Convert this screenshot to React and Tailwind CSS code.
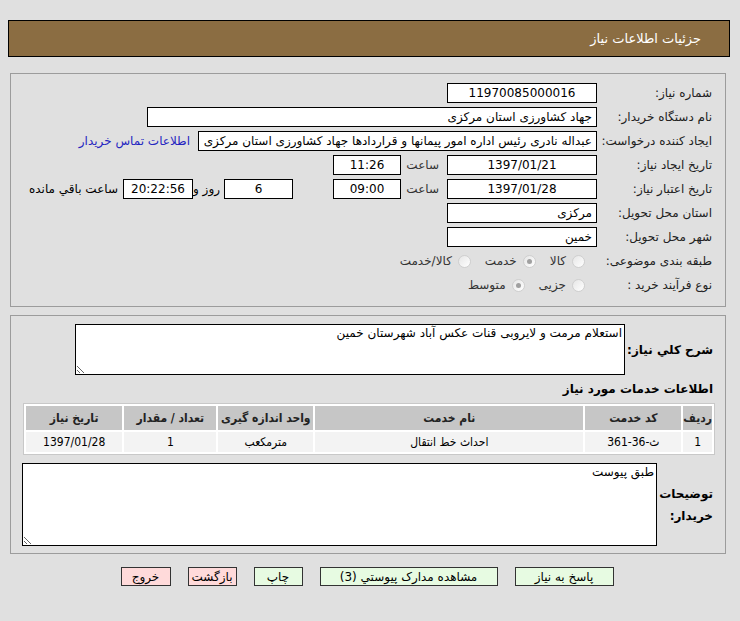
import React from 'react'

function Box({ className = '', children }) {
  return (
    <div className={`h-5 border border-black bg-white px-1 text-[12px] leading-[18px] whitespace-nowrap overflow-hidden ${className}`}>
      {children}
    </div>
  )
}

function Radio({ checked, label }) {
  return (
    <div className="flex items-center gap-[6px]">
      <span className="flex h-[13px] w-[13px] items-center justify-center rounded-full border border-[#cfcfcf] bg-gradient-to-br from-[#e6e6e6] to-white">
        {checked && <span className="h-[5px] w-[5px] rounded-full bg-[#a0a0a0]"></span>}
      </span>
      <span className="text-[12px] text-[#333]">{label}</span>
    </div>
  )
}

function Row({ label, children }) {
  return (
    <div className="flex h-6 items-center">
      <div className="w-[128px] shrink-0 pr-[13px] text-[12px] text-[#222]">{label}</div>
      {children}
    </div>
  )
}

function App() {
  return (
    <div dir="rtl" className="min-h-screen bg-[#e0e0e0] pt-5 font-['DejaVu_Sans',sans-serif] text-black">
      {/* header */}
      <div className="mr-[10px] flex h-[37px] w-[722px] items-center border border-black bg-[#8b6d42] pr-[28px] text-[13px] text-white">
        جزئیات اطلاعات نیاز
      </div>

      {/* main form */}
      <div className="mr-[14px] mt-4 h-[234px] w-[716px] border border-[#9c9c9c] pt-[7px]">
        <Row label="شماره نیاز:">
          <Box className="w-[150px] text-center">11970085000016</Box>
        </Row>
        <Row label="نام دستگاه خریدار:">
          <Box className="w-[450px]">جهاد کشاورزی استان مرکزی</Box>
        </Row>
        <Row label="ایجاد کننده درخواست:">
          <Box className="w-[399px]">عبداله نادری رئیس اداره امور پیمانها و قراردادها جهاد کشاورزی استان مرکزی</Box>
          <span className="mr-[8px] text-[12px] text-[#2525c0]">اطلاعات تماس خریدار</span>
        </Row>
        <Row label="تاریخ ایجاد نیاز:">
          <Box className="w-[150px] text-center">1397/01/21</Box>
          <span className="w-[46px] pr-[8px] text-[12px] text-[#333]">ساعت</span>
          <Box className="w-[68px] text-center">11:26</Box>
        </Row>
        <Row label="تاریخ اعتبار نیاز:">
          <Box className="w-[150px] text-center">1397/01/28</Box>
          <span className="w-[46px] pr-[8px] text-[12px] text-[#333]">ساعت</span>
          <Box className="w-[68px] text-center">09:00</Box>
          <Box className="mr-[40px] w-[69px] text-center">6</Box>
          <span className="w-[31px] pr-[4px] text-[12px]">روز و</span>
          <Box className="w-[70px] border-[#999] bg-[#efedcc] text-center">20:22:56</Box>
          <span className="pr-[5px] text-[12px]">ساعت باقي مانده</span>
        </Row>
        <Row label="استان محل تحویل:">
          <Box className="w-[150px]">مرکزی</Box>
        </Row>
        <Row label="شهر محل تحویل:">
          <Box className="w-[150px]">خمین</Box>
        </Row>
        <Row label="طبقه بندی موضوعی:">
          <div className="mr-[12px] flex items-center gap-[14px]">
            <Radio label="کالا" />
            <Radio checked label="خدمت" />
            <Radio label="کالا/خدمت" />
          </div>
        </Row>
        <Row label="نوع فرآیند خرید :">
          <div className="mr-[12px] flex items-center gap-[14px]">
            <Radio label="جزیی" />
            <Radio checked label="متوسط" />
          </div>
        </Row>
      </div>

      {/* description + items */}
      <div className="mr-[14px] mt-2 h-[239px] w-[716px] border border-[#9c9c9c] pt-[8px]">
        <div className="flex h-[51px] items-center">
          <div className="w-[100px] shrink-0 whitespace-nowrap pr-[12px] text-[12px] font-bold">شرح کلي نياز:</div>
          <textarea
            readOnly
            dir="rtl"
            className="h-[51px] w-[550px] resize border border-black bg-white px-[2px] text-[12px] leading-[16px] outline-none"
            value="استعلام مرمت و لایروبی قنات عکس آباد شهرستان خمین"
          />
        </div>

        <div className="mt-[6px] pr-[12px] text-[12px] font-bold leading-[16px]">اطلاعات خدمات مورد نیاز</div>

        <div className="mt-[6px] pr-[10px]">
          <table className="w-[692px] border-separate border-spacing-[2px] border border-[#c8c8c8] bg-white text-[12px] font-['DejaVu_Sans_Condensed','DejaVu_Sans',sans-serif]">
            <thead>
              <tr className="h-[24px] bg-[#c6c6c6] font-bold text-[#222]">
                <th className="w-[27px] font-bold">ردیف</th>
                <th className="w-[96px] font-bold">کد خدمت</th>
                <th className="w-[268px] font-bold">نام خدمت</th>
                <th className="w-[95px] font-bold">واحد اندازه گیری</th>
                <th className="w-[92px] font-bold">تعداد / مقدار</th>
                <th className="font-bold">تاریخ نیاز</th>
              </tr>
            </thead>
            <tbody>
              <tr className="h-[20px] bg-[#f3f3f3] text-center">
                <td>1</td>
                <td>ث-36-361</td>
                <td>احداث خط انتقال</td>
                <td>مترمکعب</td>
                <td>1</td>
                <td>1397/01/28</td>
              </tr>
            </tbody>
          </table>
        </div>

        <div className="mt-[8px] flex h-[83px] items-center">
          <div className="w-[68px] shrink-0 pr-[12px] text-[12px] font-bold leading-[22px]">توضیحات خریدار:</div>
          <textarea
            readOnly
            dir="rtl"
            className="h-[83px] w-[635px] resize border border-black bg-white px-[2px] text-[12px] leading-[16px] outline-none"
            value="طبق پیوست"
          />
        </div>
      </div>

      {/* buttons */}
      <div className="mt-[13px] flex w-[740px] justify-center gap-[17px] pr-[6px] text-[12px]">
        <button className="h-[19px] w-[99px] border border-[#333] bg-[#e7fbe2]">پاسخ به نیاز</button>
        <button className="h-[19px] w-[178px] border border-[#333] bg-[#e7fbe2]">مشاهده مدارک پیوستي (3)</button>
        <button className="h-[19px] w-[49px] border border-[#333] bg-[#e7fbe2]">چاپ</button>
        <button className="h-[19px] w-[49px] border border-[#333] bg-[#ffdada]">بازگشت</button>
        <button className="h-[19px] w-[50px] border border-[#333] bg-[#ffdada]">خروج</button>
      </div>
    </div>
  )
}

export default App
